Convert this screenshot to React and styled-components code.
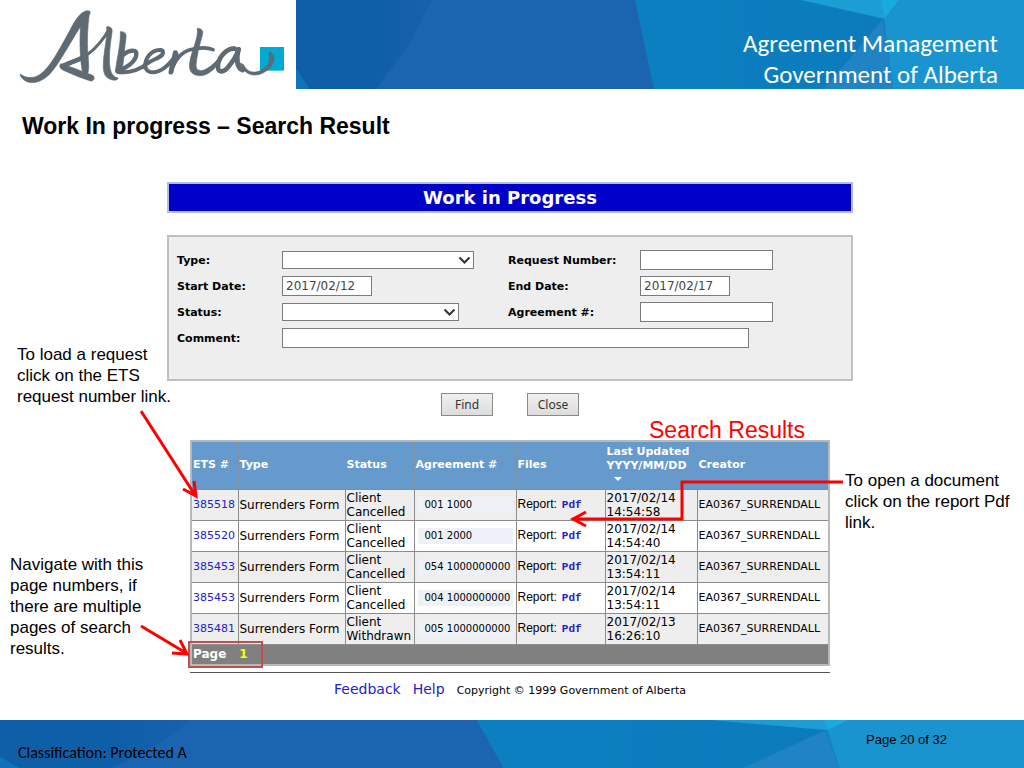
import React from 'react'
import styled, { createGlobalStyle } from 'styled-components'

const GlobalStyle = createGlobalStyle`
  * {
    box-sizing:border-box;
  }
  body {
    margin:0;
    background-color:white;
    color:black;
    font-family:"Liberation Sans", Arial, sans-serif;
  }
`

const Page = styled.div`
    min-height:100vh;
    display:flex;
    flex-direction:column;
`
const Header = styled.header`
    display:flex;
    height:89px;
`
const LogoBox = styled.div`
    flex:0 0 296px;
`
const Banner = styled.div`
    flex:1;
    position:relative;
    display:flex;
    background-color:#1a64b0;
`
const Backdrop = styled.svg`
    position:absolute;
    top:0;
    left:0;
    width:100%;
    height:100%;
`
const BannerText = styled.div`
    position:relative;
    margin-left:auto;
    padding:28px 26px 0 0;
    color:white;
    font-family:Carlito, "Open Sans", "Noto Sans", sans-serif;
    font-size:25px;
    line-height:31px;
    text-align:right;
`
const Title = styled.h1`
    margin:0;
    padding:24px 22px 0;
    font-size:23px;
    line-height:27px;
    font-weight:700;
`
const Slide = styled.main`
    flex:1;
    display:grid;
    grid-template-columns:167px 23px minmax(0, 1fr) 23px 171px;
    grid-template-rows:auto 1fr;
    row-gap:24px;
    padding-top:42px;
`
const LeftNotes = styled.div`
    grid-column:1 / 3;
    grid-row:1 / 3;
    display:flex;
    flex-direction:column;
    gap:147px;
    padding:162px 0 0 10px;
`
const RightNotes = styled.div`
    grid-column:4 / 6;
    grid-row:2;
    padding:30px 0 0 15px;
`
const Note = styled.p`
    margin:0;
    padding-left:${props => props.$indent ? "7px" : "0"};
    font-size:17px;
    line-height:21px;
    white-space:nowrap;
`
const SearchArea = styled.section`
    grid-column:2 / 5;
    grid-row:1;
    font-family:Verdana, "DejaVu Sans", sans-serif;
`
const Bar = styled.h2`
    margin:0 0 22px;
    border:2px solid #b4bedc;
    background-color:#0000c8;
    color:white;
    font-size:18px;
    line-height:27px;
    text-align:center;
`
const Form = styled.form`
    display:grid;
    grid-template-columns:105px 226px 132px 1fr;
    grid-auto-rows:26px;
    align-items:center;
    border:2px solid #c0c0c0;
    background-color:#eeeeee;
    padding:10px 8px 28px;
`
const Label = styled.label`
    font-size:11px;
    font-weight:700;
`
const Input = styled.input`
    width:${props => props.$width};
    height:20px;
    padding:0 3px;
    border:1px solid #7c7c7c;
    background-color:white;
    color:#444;
    font-family:inherit;
    font-size:12px;
    grid-column:${props => props.$wide ? "span 3" : "auto"};
`
const SelectWrap = styled.div`
    position:relative;
    width:${props => props.$width};
    height:18px;
`
const Select = styled.select`
    display:block;
    width:100%;
    height:100%;
    appearance:none;
    border:1px solid #7c7c7c;
    border-radius:0;
    background-color:white;
    font-size:12px;
`
const Chevron = styled.svg`
    position:absolute;
    top:5px;
    right:3px;
    pointer-events:none;
`
const Buttons = styled.div`
    display:flex;
    justify-content:center;
    gap:34px;
    padding-top:12px;
`
const Button = styled.button`
    width:52px;
    height:23px;
    padding:0;
    border:1px solid #8a8a8a;
    background:linear-gradient(#f0f0f0, #dcdcdc);
    color:#333;
    font-family:"Noto Sans", sans-serif;
    font-size:12px;
`
const Results = styled.section`
    position:relative;
    grid-column:3;
    grid-row:2;
    font-family:Verdana, "DejaVu Sans", sans-serif;
`
const ResultsTag = styled.div`
    position:absolute;
    right:25px;
    top:-23px;
    color:#f00;
    font-family:"Liberation Sans", Arial, sans-serif;
    font-size:23px;
    line-height:27px;
`
const Table = styled.table`
    width:100%;
    table-layout:fixed;
    border-collapse:collapse;
    border:2px solid #b8b8b8;
    font-size:12px;
    line-height:14px;
`
const Th = styled.th`
    height:48px;
    padding:0 1px;
    border-right:1px solid #7d93ab;
    background-color:#6699cc;
    color:white;
    font-size:11px;
    text-align:left;
    white-space:nowrap;
`
const SortMark = styled.svg`
    display:block;
    margin:4px 0 4px 7px;
`
const Tr = styled.tr`
    background-color:${props => props.$shaded ? "#eeeeee" : "white"};
`
const Td = styled.td`
    height:31px;
    padding:0 1px;
    border:1px solid #8c8c8c;
    white-space:nowrap;
`
const CodeTd = styled(Td)`
    font-size:11px;
`
const Agreement = styled.div`
    margin:0 2px;
    padding-left:7px;
    background-color:#eef2f8;
    font-size:10px;
    line-height:16px;
`
const Report = styled.span`
    font-family:"Liberation Sans", Arial, sans-serif;
    font-size:12px;
`
const Link = styled.a`
    color:#2222cc;
    text-decoration:none;
`
const PdfLink = styled(Link)`
    margin-left:5px;
    font-family:"Liberation Mono", monospace;
    font-size:11px;
    font-weight:700;
`
const PagerCell = styled.td`
    height:21px;
    padding:0 1px;
    background-color:#808080;
    color:white;
    font-weight:700;
`
const PageNumber = styled.a`
    margin-left:13px;
    color:#ff0;
    text-decoration:none;
`
const PagerFrame = styled.div`
    position:absolute;
    left:-2px;
    top:201px;
    width:75px;
    height:27px;
    border:2px solid #c0504d;
`
const Arrows = styled.svg`
    position:absolute;
    top:-30px;
    left:${props => props.$right ? "auto" : "-50px"};
    right:${props => props.$right ? "-14px" : "auto"};
    pointer-events:none;
`
const Copyright = styled.div`
    display:flex;
    justify-content:center;
    align-items:baseline;
    gap:12px;
    margin-top:6px;
    padding-top:7px;
    border-top:1px solid #555;
    font-size:11px;
    line-height:18px;
`
const BigLink = styled(Link)`
    font-size:14px;
`
const Footer = styled.footer`
    position:relative;
    display:flex;
    justify-content:space-between;
    height:48px;
    background-color:#1a64b0;
`
const Classification = styled.div`
    position:relative;
    padding:24px 0 0 18px;
    font-family:Carlito, "Open Sans", "Noto Sans", sans-serif;
    font-size:16px;
    line-height:18px;
`
const PageCount = styled.div`
    position:relative;
    padding:12px 77px 0 0;
    font-size:13px;
    line-height:15px;
`

const rows = [
  { ets: "385518", status: "Cancelled", agreement: "001 1000", date: "2017/02/14", time: "14:54:58" },
  { ets: "385520", status: "Cancelled", agreement: "001 2000", date: "2017/02/14", time: "14:54:40" },
  { ets: "385453", status: "Cancelled", agreement: "054 1000000000", date: "2017/02/14", time: "13:54:11" },
  { ets: "385453", status: "Cancelled", agreement: "004 1000000000", date: "2017/02/14", time: "13:54:11" },
  { ets: "385481", status: "Withdrawn", agreement: "005 1000000000", date: "2017/02/13", time: "16:26:10" },
]

const Facets = () => (
  <Backdrop viewBox="0 0 728 89" preserveAspectRatio="none" aria-hidden="true">
    <defs>
      <linearGradient id="mid" x1="0" x2="1">
        <stop offset="0" stopColor="#0b80c1" />
        <stop offset="1" stopColor="#0c78b8" />
      </linearGradient>
      <linearGradient id="dark" x1="0" x2="1">
        <stop offset="0.6" stopColor="#0f5ea8" />
        <stop offset="1" stopColor="#1761ac" />
      </linearGradient>
    </defs>
    <path d="M0 0H136L112 46L80 89H0Z" fill="url(#dark)" />
    <path d="M0 68L14 89H0Z" fill="#0f72ba" />
    <path d="M339 0H728V89H358Z" fill="url(#mid)" />
    <path d="M505 0H603L589 19Z" fill="#1c9dd3" />
    <path d="M585 0H603L589 19Z" fill="#18acdc" />
    <path d="M587 19L528 89H597Z" fill="#2083c4" />
    <path d="M603 0H728V89H597L588 19Z" fill="#1a94cf" />
  </Backdrop>
)

const Logo = () => (
  <svg width="296" height="89" viewBox="0 0 888 267" role="img" aria-label="Alberta">
    <rect x="780" y="141" width="72" height="71" fill="#00aad2" />
    <g fill="#5f6a72" stroke="#5f6a72" strokeWidth="2">
      <path d="M60 222C78 235 97 235 112 228C142 214 168 166 195 118C218 78 232 40 258 33C268 31 274 35 269 41C256 57 247 71 237 87C208 132 180 187 152 219C130 245 97 254 77 243C67 238 61 230 60 222Z" />
      <path d="M244 55L268 41C263 77 260 128 264 163C265 184 268 203 264 218C257 224 248 219 246 209C239 166 238 104 244 55Z" />
      <path d="M182 191C203 197 247 214 278 226C287 232 281 245 272 243C250 236 221 225 193 212C181 207 176 199 182 191Z" />
      <path d="M320 80C334 79 338 87 336 98C331 128 326 170 329 195C331 221 341 232 354 234C354 242 338 242 329 237C314 231 309 216 310 192C311 153 323 111 320 80Z" />
      <path d="M361 95C373 94 380 101 378 113C373 143 372 181 366 211C361 225 346 222 347 208C352 170 363 126 361 95Z" />
      <path d="M592 85C603 85 611 91 607 105C598 136 590 171 588 195C588 212 601 216 617 208C636 198 650 183 660 169L666 174C650 203 626 227 601 227C575 227 566 212 569 190C573 154 596 117 592 85Z" />
      <path d="M808 155C820 160 824 170 821 180C816 207 787 226 761 225C739 223 728 209 720 189L731 194C738 211 752 218 768 216C788 213 807 196 808 181C810 171 804 163 808 155Z" />
    </g>
    <g fill="none" stroke="#5f6a72" strokeLinecap="round" strokeLinejoin="round">
      <path d="M187 196C211 184 245 176 267 160C294 139 311 116 326 90" strokeWidth="9" />
      <path d="M187 199C207 190 225 182 245 175" strokeWidth="14" />
      <path d="M360 174C380 151 409 144 409 162C409 185 375 208 352 211" strokeWidth="13" />
      <path d="M352 215C385 221 419 209 444 189C461 177 490 172 489 156C487 143 455 151 442 173C427 201 440 218 461 217C489 215 511 190 530 163" strokeWidth="12" />
      <path d="M526 158C522 181 516 196 513 216" strokeWidth="15" />
      <path d="M514 213C524 183 542 157 570 149C596 143 620 141 639 149" strokeWidth="11" />
      <path d="M704 146C679 144 657 172 654 195C652 218 667 219 681 205C697 188 711 163 716 148" strokeWidth="14" />
      <path d="M715 149C708 172 710 206 728 210" strokeWidth="15" />
    </g>
  </svg>
)

const Dropdown = ({ id, width }) => (
  <SelectWrap $width={width}>
    <Select id={id} defaultValue=""><option value="" /></Select>
    <Chevron width="13" height="9" viewBox="0 0 13 9">
      <path d="M1.500 1.500L6.500 6.500L11.500 1.500" fill="none" stroke="#333" strokeWidth="2" />
    </Chevron>
  </SelectWrap>
)

const SearchForm = () => (
  <SearchArea>
    <Bar>Work in Progress</Bar>
    <Form id="search">
      <Label htmlFor="type">Type:</Label>
      <Dropdown id="type" width="192px" />
      <Label htmlFor="request">Request Number:</Label>
      <Input id="request" $width="133px" />
      <Label htmlFor="start">Start Date:</Label>
      <Input id="start" $width="90px" defaultValue="2017/02/12" />
      <Label htmlFor="end">End Date:</Label>
      <Input id="end" $width="90px" defaultValue="2017/02/17" />
      <Label htmlFor="status">Status:</Label>
      <Dropdown id="status" width="177px" />
      <Label htmlFor="agreement">Agreement #:</Label>
      <Input id="agreement" $width="133px" />
      <Label htmlFor="comment">Comment:</Label>
      <Input id="comment" $width="467px" $wide />
    </Form>
    <Buttons>
      <Button type="button">Find</Button>
      <Button type="button">Close</Button>
    </Buttons>
  </SearchArea>
)

const ResultsTable = () => (
  <Table>
    <colgroup>
      <col style={{ width: 47 }} />
      <col style={{ width: 107 }} />
      <col style={{ width: 69 }} />
      <col style={{ width: 102 }} />
      <col style={{ width: 89 }} />
      <col style={{ width: 92 }} />
      <col />
    </colgroup>
    <thead>
      <tr>
        <Th>ETS #</Th>
        <Th>Type</Th>
        <Th>Status</Th>
        <Th>Agreement #</Th>
        <Th>Files</Th>
        <Th>
          Last Updated<br />YYYY/MM/DD
          <SortMark width="8" height="4" viewBox="0 0 8 4"><path d="M0 0H8L4 4Z" fill="white" /></SortMark>
        </Th>
        <Th>Creator</Th>
      </tr>
    </thead>
    <tbody>
      {rows.map((row, i) => (
        <Tr key={i} $shaded={i % 2 === 0}>
          <CodeTd><Link href="#request">{row.ets}</Link></CodeTd>
          <Td>Surrenders Form</Td>
          <Td>Client<br />{row.status}</Td>
          <Td><Agreement>{row.agreement}</Agreement></Td>
          <Td><Report>Report:</Report><PdfLink href="#pdf">Pdf</PdfLink></Td>
          <Td>{row.date}<br />{row.time}</Td>
          <CodeTd>EA0367_SURRENDALL</CodeTd>
        </Tr>
      ))}
      <tr>
        <PagerCell colSpan="7">Page<PageNumber href="#page1">1</PageNumber></PagerCell>
      </tr>
    </tbody>
  </Table>
)

const App = () => {
  return (
    <Page>
      <GlobalStyle />
      <Header>
        <LogoBox><Logo /></LogoBox>
        <Banner>
          <Facets />
          <BannerText>Agreement Management<br />Government of Alberta</BannerText>
        </Banner>
      </Header>
      <Title>Work In progress – Search Result</Title>
      <Slide>
        <LeftNotes>
          <Note $indent>To load a request<br />click on the ETS<br />request number link.</Note>
          <Note>Navigate with this<br />page numbers, if<br />there are multiple<br />pages of search<br />results.</Note>
        </LeftNotes>
        <SearchForm />
        <Results>
          <ResultsTag>Search Results</ResultsTag>
          <ResultsTable />
          <Copyright>
            <BigLink href="#feedback">Feedback</BigLink>
            <BigLink href="#help">Help</BigLink>
            <span>Copyright © 1999 Government of Alberta</span>
          </Copyright>
          <PagerFrame />
          <Arrows width="60" height="260" viewBox="0 0 60 260">
            <g fill="none" stroke="#f00" strokeWidth="3">
              <path d="M1 1L55 85M54 71L56 86L43 79" />
              <path d="M1 216L46 243M40 230L47 244L32 243" />
            </g>
          </Arrows>
          <Arrows $right width="280" height="130" viewBox="0 0 280 130">
            <path d="M279 72H118V109H9M22 102L9 109L22 116" fill="none" stroke="#f00" strokeWidth="3" />
          </Arrows>
        </Results>
        <RightNotes>
          <Note>To open a document<br />click on the report Pdf<br />link.</Note>
        </RightNotes>
      </Slide>
      <Footer>
        <Facets />
        <Classification>Classification: Protected A</Classification>
        <PageCount>Page 20 of 32</PageCount>
      </Footer>
    </Page>
  )
}

export default App
